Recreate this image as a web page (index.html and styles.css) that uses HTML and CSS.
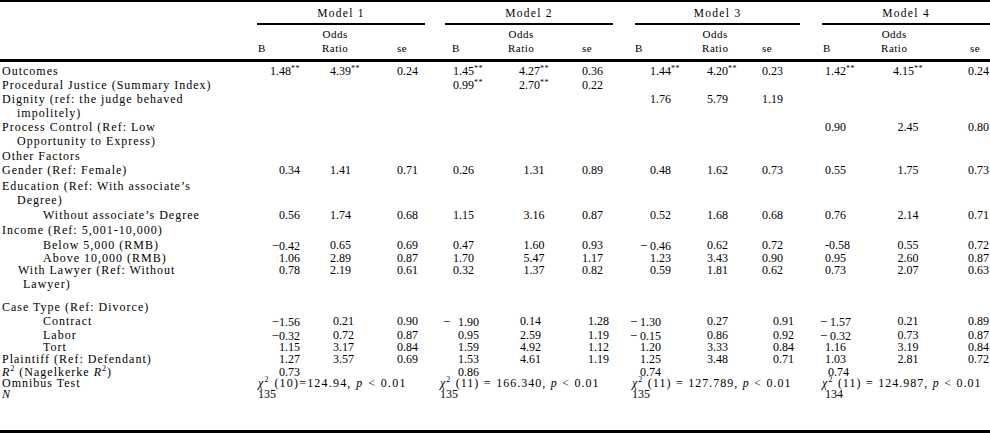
FILE: index.html
```html
<!DOCTYPE html>
<html lang="en">
<head>
<meta charset="utf-8">
<title>Logistic regression models</title>
<link rel="stylesheet" href="styles.css">
</head>
<body>
<table class="reg">
  <colgroup>
    <col class="c-lab"><col class="c-b1"><col class="c-o1"><col class="c-s1"><col class="c-g1">
    <col class="c-b2"><col class="c-o2"><col class="c-s2"><col class="c-g2">
    <col class="c-b3"><col class="c-o3"><col class="c-s3"><col class="c-g3">
    <col class="c-b4"><col class="c-o4"><col class="c-s4">
  </colgroup>
  <thead>
    <tr class="h1">
      <th class="corner" rowspan="2"></th>
      <th class="model" colspan="3">Model 1</th><th class="gap"></th>
      <th class="model" colspan="3">Model 2</th><th class="gap"></th>
      <th class="model" colspan="3">Model 3</th><th class="gap"></th>
      <th class="model" colspan="3">Model 4</th>
    </tr>
    <tr class="h2">
      <th class="hb hb1">B</th><th class="ho ho1"><span class="or">Odds<br>Ratio</span></th><th class="hs hs1">se</th><th class="gap"></th>
      <th class="hb hb2">B</th><th class="ho ho2"><span class="or">Odds<br>Ratio</span></th><th class="hs hs2">se</th><th class="gap"></th>
      <th class="hb hb3">B</th><th class="ho ho3"><span class="or">Odds<br>Ratio</span></th><th class="hs hs3">se</th><th class="gap"></th>
      <th class="hb hb4">B</th><th class="ho ho4"><span class="or">Odds<br>Ratio</span></th><th class="hs hs4">se</th>
    </tr>
  </thead>
  <tbody>
    <tr class="r-first">
      <td class="lab">Outcomes</td>
      <td class="b1">1.48<sup class="s">**</sup></td><td class="o1">4.39<sup class="s">**</sup></td><td class="s1">0.24</td><td></td>
      <td class="b2">1.45<sup class="s">**</sup></td><td class="o2">4.27<sup class="s">**</sup></td><td class="s2">0.36</td><td></td>
      <td class="b3">1.44<sup class="s">**</sup></td><td class="o3">4.20<sup class="s">**</sup></td><td class="s3">0.23</td><td></td>
      <td class="b4">1.42<sup class="s">**</sup></td><td class="o4">4.15<sup class="s">**</sup></td><td class="s4">0.24</td>
    </tr>
    <tr class="r14">
      <td class="lab">Procedural Justice (Summary Index)</td>
      <td class="b1"></td><td class="o1"></td><td class="s1"></td><td></td>
      <td class="b2">0.99<sup class="s">**</sup></td><td class="o2">2.70<sup class="s">**</sup></td><td class="s2">0.22</td><td></td>
      <td class="b3"></td><td class="o3"></td><td class="s3"></td><td></td>
      <td class="b4"></td><td class="o4"></td><td class="s4"></td>
    </tr>
    <tr class="r28">
      <td class="lab">Dignity (ref: the judge behaved<span class="wrap">impolitely)</span></td>
      <td class="b1"></td><td class="o1"></td><td class="s1"></td><td></td>
      <td class="b2"></td><td class="o2"></td><td class="s2"></td><td></td>
      <td class="b3">1.76</td><td class="o3">5.79</td><td class="s3">1.19</td><td></td>
      <td class="b4"></td><td class="o4"></td><td class="s4"></td>
    </tr>
    <tr class="r29">
      <td class="lab">Process Control (Ref: Low<span class="wrap">Opportunity to Express)</span></td>
      <td class="b1"></td><td class="o1"></td><td class="s1"></td><td></td>
      <td class="b2"></td><td class="o2"></td><td class="s2"></td><td></td>
      <td class="b3"></td><td class="o3"></td><td class="s3"></td><td></td>
      <td class="b4">0.90</td><td class="o4">2.45</td><td class="s4">0.80</td>
    </tr>
    <tr class="r14">
      <td class="lab">Other Factors</td><td colspan="15"></td>
    </tr>
    <tr class="r16">
      <td class="lab">Gender (Ref: Female)</td>
      <td class="b1">0.34</td><td class="o1">1.41</td><td class="s1">0.71</td><td></td>
      <td class="b2">0.26</td><td class="o2">1.31</td><td class="s2">0.89</td><td></td>
      <td class="b3">0.48</td><td class="o3">1.62</td><td class="s3">0.73</td><td></td>
      <td class="b4">0.55</td><td class="o4">1.75</td><td class="s4">0.73</td>
    </tr>
    <tr class="r29">
      <td class="lab">Education (Ref: With associate’s<span class="wrap">Degree)</span></td><td colspan="15"></td>
    </tr>
    <tr class="r15">
      <td class="lab sub">Without associate’s Degree</td>
      <td class="b1">0.56</td><td class="o1">1.74</td><td class="s1">0.68</td><td></td>
      <td class="b2">1.15</td><td class="o2">3.16</td><td class="s2">0.87</td><td></td>
      <td class="b3">0.52</td><td class="o3">1.68</td><td class="s3">0.68</td><td></td>
      <td class="b4">0.76</td><td class="o4">2.14</td><td class="s4">0.71</td>
    </tr>
    <tr class="r15">
      <td class="lab">Income (Ref: 5,001-10,000)</td><td colspan="15"></td>
    </tr>
    <tr class="r13">
      <td class="lab sub">Below 5,000 (RMB)</td>
      <td class="b1"><span class="m">−</span>0.42</td><td class="o1">0.65</td><td class="s1">0.69</td><td></td>
      <td class="b2">0.47</td><td class="o2">1.60</td><td class="s2">0.93</td><td></td>
      <td class="b3"><span class="m">−</span>0.46</td><td class="o3">0.62</td><td class="s3">0.72</td><td></td>
      <td class="b4">-0.58</td><td class="o4">0.55</td><td class="s4">0.72</td>
    </tr>
    <tr class="r12">
      <td class="lab sub">Above 10,000 (RMB)</td>
      <td class="b1">1.06</td><td class="o1">2.89</td><td class="s1">0.87</td><td></td>
      <td class="b2">1.70</td><td class="o2">5.47</td><td class="s2">1.17</td><td></td>
      <td class="b3">1.23</td><td class="o3">3.43</td><td class="s3">0.90</td><td></td>
      <td class="b4">0.95</td><td class="o4">2.60</td><td class="s4">0.87</td>
    </tr>
    <tr class="r37">
      <td class="lab lawyer">With Lawyer (Ref: Without<span class="wrap">Lawyer)</span></td>
      <td class="b1">0.78</td><td class="o1">2.19</td><td class="s1">0.61</td><td></td>
      <td class="b2">0.32</td><td class="o2">1.37</td><td class="s2">0.82</td><td></td>
      <td class="b3">0.59</td><td class="o3">1.81</td><td class="s3">0.62</td><td></td>
      <td class="b4">0.73</td><td class="o4">2.07</td><td class="s4">0.63</td>
    </tr>
    <tr class="r14 lo">
      <td class="lab">Case Type (Ref: Divorce)</td><td colspan="15"></td>
    </tr>
    <tr class="r14 lo">
      <td class="lab sub">Contract</td>
      <td class="b1"><span class="m">−</span>1.56</td><td class="o1">0.21</td><td class="s1">0.90</td><td></td>
      <td class="b2"><span class="m m2">−</span>1.90</td><td class="o2">0.14</td><td class="s2">1.28</td><td></td>
      <td class="b3"><span class="m">−</span>1.30</td><td class="o3">0.27</td><td class="s3">0.91</td><td></td>
      <td class="b4 neg"><span class="m">−</span>1.57</td><td class="o4">0.21</td><td class="s4">0.89</td>
    </tr>
    <tr class="r12 lo">
      <td class="lab sub">Labor</td>
      <td class="b1"><span class="m">−</span>0.32</td><td class="o1">0.72</td><td class="s1">0.87</td><td></td>
      <td class="b2">0.95</td><td class="o2">2.59</td><td class="s2">1.19</td><td></td>
      <td class="b3"><span class="m">−</span>0.15</td><td class="o3">0.86</td><td class="s3">0.92</td><td></td>
      <td class="b4 neg"><span class="m">−</span>0.32</td><td class="o4">0.73</td><td class="s4">0.87</td>
    </tr>
    <tr class="r12 lo">
      <td class="lab sub">Tort</td>
      <td class="b1">1.15</td><td class="o1">3.17</td><td class="s1">0.84</td><td></td>
      <td class="b2">1.59</td><td class="o2">4.92</td><td class="s2">1.12</td><td></td>
      <td class="b3">1.20</td><td class="o3">3.33</td><td class="s3">0.84</td><td></td>
      <td class="b4">1.16</td><td class="o4">3.19</td><td class="s4">0.84</td>
    </tr>
    <tr class="r13 lo">
      <td class="lab">Plaintiff (Ref: Defendant)</td>
      <td class="b1">1.27</td><td class="o1">3.57</td><td class="s1">0.69</td><td></td>
      <td class="b2">1.53</td><td class="o2">4.61</td><td class="s2">1.19</td><td></td>
      <td class="b3">1.25</td><td class="o3">3.48</td><td class="s3">0.71</td><td></td>
      <td class="b4">1.03</td><td class="o4">2.81</td><td class="s4">0.72</td>
    </tr>
    <tr class="r11 lo">
      <td class="lab"><i>R</i><sup class="t">2</sup> (Nagelkerke <i>R</i><sup class="t">2</sup>)</td>
      <td class="b1">0.73</td><td class="o1"></td><td class="s1"></td><td></td>
      <td class="b2">0.86</td><td class="o2"></td><td class="s2"></td><td></td>
      <td class="b3">0.74</td><td class="o3"></td><td class="s3"></td><td></td>
      <td class="b4 r2">0.74</td><td class="o4"></td><td class="s4"></td>
    </tr>
    <tr class="r11 lo">
      <td class="lab">Omnibus Test</td>
      <td class="chi chi1 k1" colspan="3"><i>χ</i><sup class="t">2</sup> (10)=124.94, <i>p</i> &lt; 0.01</td>
      <td class="chi k2" colspan="4"><i>χ</i><sup class="t">2</sup> (11) = 166.340, <i>p</i> &lt; 0.01</td>
      <td class="chi k3" colspan="4"><i>χ</i><sup class="t">2</sup> (11) = 127.789, <i>p</i> &lt; 0.01</td>
      <td class="chi k4" colspan="4"><i>χ</i><sup class="t">2</sup> (11) = 124.987, <i>p</i> &lt; 0.01</td>
    </tr>
    <tr class="r-last lo">
      <td class="lab"><i>N</i></td>
      <td class="k1" colspan="3">135</td>
      <td class="k2" colspan="4">135</td>
      <td class="k3" colspan="4">135</td>
      <td class="k4 n4" colspan="4">134</td>
    </tr>
  </tbody>
</table>
</body>
</html>
```

FILE: styles.css
```css
* { box-sizing: border-box; }

html, body {
  margin: 0;
  padding: 0;
  background: #fff;
}

body {
  font-family: "Liberation Serif", "Times New Roman", serif;
  font-size: 12px;
  color: #000;
}

.reg {
  width: 990px;
  table-layout: fixed;
  border-collapse: separate;
  border-spacing: 0;
  border-top: 2px solid #000;
  border-bottom: 3px solid #000;
}

/* column widths */
.c-lab { width: 257px; }
.c-b1 { width: 63px; }
.c-o1 { width: 73px; }
.c-s1 { width: 32px; }
.c-g1 { width: 20px; }
.c-b2 { width: 63px; }
.c-o2 { width: 70px; }
.c-s2 { width: 35px; }
.c-g2 { width: 22px; }
.c-b3 { width: 65px; }
.c-o3 { width: 60px; }
.c-s3 { width: 40px; }
.c-g3 { width: 22px; }
.c-b4 { width: 58px; }
.c-o4 { width: 85px; }
.c-s4 { width: 25px; }

th, td {
  padding: 0;
  font-weight: normal;
  text-align: left;
  vertical-align: top;
  white-space: nowrap;
  line-height: 11px;
}

/* ---------- header ---------- */
.h1 th {
  padding-top: 5px;
  padding-bottom: 3px;
  line-height: 13px;
  font-size: 11.5px;
  letter-spacing: 1.3px;
}
.h1 .model {
  text-align: center;
  border-bottom: 2px solid #000;
}
.corner {
  border-bottom: 3px solid #000;
}
.h2 th {
  padding-top: 2px;
  padding-bottom: 4px;
  line-height: 14px;
  font-size: 11px;
  letter-spacing: 0.5px;
  border-bottom: 3px solid #000;
}
.h2 .hb, .h2 .hs { vertical-align: bottom; }
.or { display: inline-block; text-align: center; }

.hb1 { padding-left: 1px; }
.ho1 { padding-left: 2px; }
.hs1 { padding-left: 4px; }
.hb2 { padding-left: 7px; }
.ho2 { padding-left: 0; }
.hs2 { padding-left: 4px; }
.hb3 { padding-left: 0; }
.ho3 { padding-left: 2px; }
.hs3 { padding-left: 2px; }
.hb4 { padding-left: 1px; }
.ho4 { padding-left: 1px; }
.hs4 { padding-left: 5px; }

/* ---------- body rows ---------- */
.r-first { height: 18px; }
.r-first td { padding-top: 4px; }
.r11 { height: 11px; }
.r12 { height: 12px; }
.r13 { height: 13px; }
.r14 { height: 14px; }
.r15 { height: 15px; }
.r16 { height: 16px; }
.r28 { height: 28px; }
.r29 { height: 29px; }
.r37 { height: 37px; }
.r-last { height: 41px; }

.lab {
  padding-left: 2px;
  letter-spacing: 1px;
}
.lab .wrap {
  display: block;
  padding-left: 15px;
  margin-top: 2.5px;
}
.lab.sub { padding-left: 43px; }
.lab.lawyer { padding-left: 18px; }
.lab.lawyer .wrap { padding-left: 5px; }

/* numeric columns */
.b1 { text-align: right; padding-right: 20px; }
.o1 { padding-left: 10px; }
.s1 { padding-left: 4px; }
.b2 { padding-left: 8px; }
.o2 { text-align: center; padding-right: 18px; }
.s2 { padding-left: 4px; }
.b3 { padding-left: 15px; }
.o3 { padding-left: 7px; }
.s3 { padding-left: 2px; }
.b4 { padding-left: 3px; }
.o4 { text-align: center; padding-right: 29px; }
.s4 { padding-left: 3px; }

.lo .o1 { padding-left: 13px; }
.lo .b2 { padding-left: 13px; }
.lo .o2 { text-align: left; padding-left: 12px; padding-right: 0; }
.lo .s2 { padding-left: 10px; }
.lo .b3 { padding-left: 5px; }
.lo .s3 { padding-left: 13px; }
.lo .b4.neg { padding-left: 8px; }
.lo .b4.r2 { padding-left: 6px; }

/* hanging minus sign */
.m {
  display: inline-block;
  width: 10px;
  margin-left: -10px;
  font-size: 13px;
}
.m.m2 {
  width: 15px;
  margin-left: -15px;
}

.s {
  font-size: 8px;
  line-height: 0;
  vertical-align: 4px;
  letter-spacing: 0.5px;
}
.t {
  font-size: 8px;
  line-height: 0;
  vertical-align: 5px;
}

.chi {
  letter-spacing: 1px;
  word-spacing: 0.5px;
}
.chi.chi1 {
  letter-spacing: 1.2px;
}
.k1 { padding-left: 1px; }
.k2 { padding-left: 15px; }
.k3 { padding-left: 19px; }
.k4 { padding-left: 22px; }
.k4.n4 { padding-left: 25px; }
```
